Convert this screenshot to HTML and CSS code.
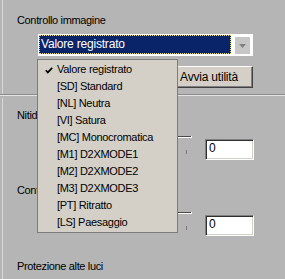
FILE: index.html
```html
<!DOCTYPE html>
<html lang="it">
<head>
  <meta charset="UTF-8" />
  <title>Controllo immagine</title>
  <link rel="stylesheet" href="styles.css">
</head>
<body>
  <div class="panel">
    <div class="group group-top">
      <div class="label label-first">Controllo immagine</div>
      <div class="combo">
        <div class="combo-field"><span>Valore registrato</span></div>
        <div class="combo-btn">
          <svg width="7" height="4" viewBox="0 0 7 4"><polygon points="0,0 7,0 3.5,4" fill="#808080"/></svg>
        </div>
      </div>
      <button class="btn">Avvia utilità</button>
    </div>

    <div class="separator"></div>

    <div class="group group-bottom">
      <div class="label">Nitidezza</div>
      <div class="slider-row">
        <div class="slider"><span class="track"></span><span class="tick"></span></div>
        <div class="field">0</div>
      </div>
      <div class="label">Contrasto</div>
      <div class="slider-row">
        <div class="slider"><span class="track"></span><span class="tick"></span></div>
        <div class="field">0</div>
      </div>
      <div class="label">Protezione alte luci</div>
    </div>
  </div>

  <ul class="dropdown">
    <li class="checked">
      <svg class="check" width="8" height="7" viewBox="0 0 8 7"><polyline points="0.8,3.2 2.8,5.4 7.2,0.8" fill="none" stroke="#000" stroke-width="1.7"/></svg>
      Valore registrato
    </li>
    <li>[SD] Standard</li>
    <li>[NL] Neutra</li>
    <li>[VI] Satura</li>
    <li>[MC] Monocromatica</li>
    <li>[M1] D2XMODE1</li>
    <li>[M2] D2XMODE2</li>
    <li>[M3] D2XMODE3</li>
    <li>[PT] Ritratto</li>
    <li>[LS] Paesaggio</li>
  </ul>
</body>
</html>
```

FILE: styles.css
```css
html, body {
  margin: 0;
  padding: 0;
  width: 285px;
  height: 279px;
  overflow: hidden;
  background: #b5b5b5;
  font-family: "Liberation Sans", Arial, sans-serif;
  font-size: 11px;
  color: #000;
}
.panel {
  display: flex;
  flex-direction: column;
  height: 279px;
}
.group {
  margin-left: 2px;
  border-left: 1px solid #d8d8d8;
  display: flex;
  flex-direction: column;
}
.group-top {
  height: 94px;
}
.label {
  line-height: 13px;
  padding-left: 14px;
  letter-spacing: -0.35px;
  white-space: nowrap;
}
.label-first {
  margin-top: 14px;
}
.combo {
  margin: 7px 0 0 35px;
  width: 215px;
  height: 22px;
  box-sizing: border-box;
  background: #fff;
  display: flex;
  align-items: flex-start;
  padding: 1px 3px 0 1px;
  gap: 4px;
}
.combo-field {
  flex: 1;
  height: 19px;
  background: #0a246a;
  color: #fff;
  box-sizing: border-box;
  outline: 1px dotted #e8d870;
  outline-offset: -1px;
  padding-left: 2px;
  font-size: 12px;
  line-height: 19px;
  letter-spacing: -0.2px;
}
.combo-btn {
  width: 15px;
  height: 17px;
  margin-top: 2px;
  background: #c6c6c6;
  display: flex;
  align-items: center;
  justify-content: center;
}
.btn {
  align-self: flex-end;
  margin: 10px 32px 0 0;
  width: 88px;
  height: 22px;
  padding: 0;
  background: #d4d0c8;
  font-family: inherit;
  font-size: 12px;
  letter-spacing: -0.2px;
  border: 1px solid;
  border-color: #fff #404040 #404040 #fff;
  box-shadow: inset -1px -1px #808080;
}
.separator {
  height: 1px;
  background: #8c8c8c;
  border-bottom: 1px solid #e4e4e4;
}
.group-bottom {
  margin-top: 2px;
  padding-top: 11px;
  flex: 1;
  min-height: 0;
  overflow: hidden;
}
.slider-row {
  display: flex;
  margin: 14px 0 24px 0;
  height: 24px;
}
.group-bottom .slider-row + .label + .slider-row {
  margin-top: 15px;
}
.slider {
  position: relative;
  margin-left: 57px;
  width: 132px;
  height: 24px;
}
.track {
  display: block;
  height: 1px;
  background: #4a4a4a;
  border-bottom: 1px solid #fff;
  border-right: 1px solid #fff;
}
.tick {
  position: absolute;
  left: 126px;
  top: 14px;
  width: 1px;
  height: 4px;
  background: #7a7a7a;
}
.field {
  margin: 3px 0 0 13px;
  width: 49px;
  height: 21px;
  box-sizing: border-box;
  background: #fff;
  border: 1px solid;
  border-color: #808080 #fff #fff #808080;
  box-shadow: inset 1px 1px #303030, inset -1px -1px #d4d0c8;
  font-size: 12px;
  line-height: 17px;
  padding-left: 3px;
}
.dropdown {
  position: absolute;
  left: 37px;
  top: 59px;
  width: 141px;
  height: 174px;
  box-sizing: border-box;
  margin: 0;
  padding: 1px 0 0 0;
  list-style: none;
  background: #d4d0c8;
  border: 1px solid #7c7c7c;
}
.dropdown li {
  position: relative;
  height: 17px;
  line-height: 17px;
  padding-left: 19px;
  letter-spacing: -0.3px;
  white-space: nowrap;
}
.check {
  position: absolute;
  left: 7px;
  top: 6px;
}
```
